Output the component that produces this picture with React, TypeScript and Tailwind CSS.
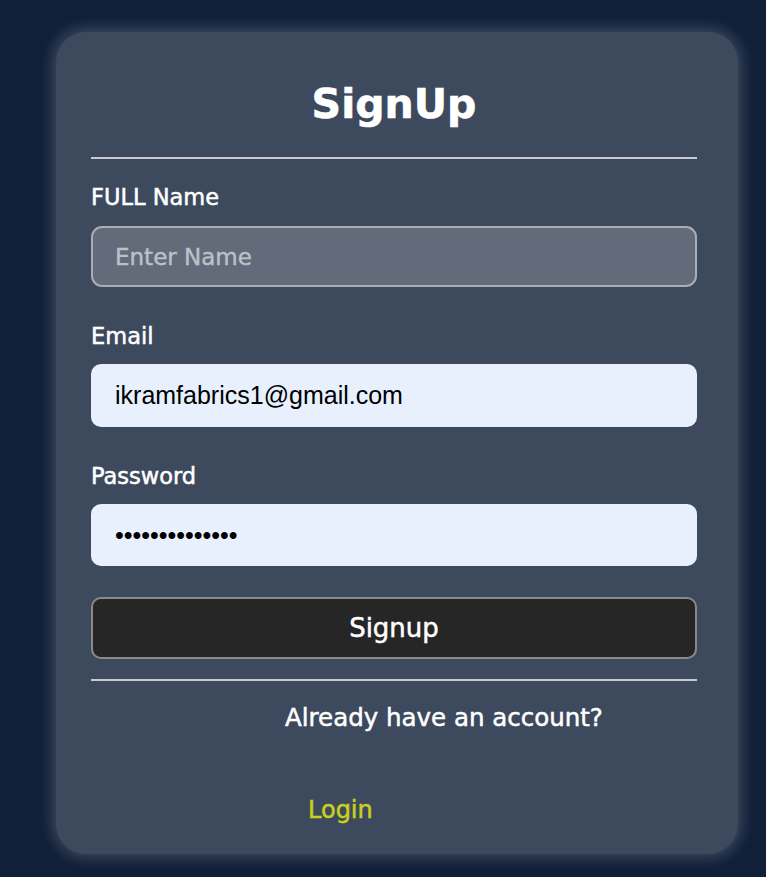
import { useState } from "react";

export default function App() {
  const [name, setName] = useState("");
  const [email, setEmail] = useState("ikramfabrics1@gmail.com");
  const [password, setPassword] = useState("ikramfabrics12");

  // DejaVu Book is a bit light next to the original medium weight; a thin stroke thickens it
  const medium = "[-webkit-text-stroke:0.5px_currentColor]";

  return (
    <div className="min-h-[877px] bg-[#112039] pl-[56px] pt-[32px] font-['DejaVu_Sans',sans-serif]">
      <form
        onSubmit={(e) => e.preventDefault()}
        className="w-[682px] rounded-[30px] bg-[#3d4a5e] pl-[35px] pr-[41px] pt-[38px] pb-[29px] shadow-[0_0_14px_4px_rgba(255,255,255,0.18)]"
      >
        <h1 className="text-center text-[41px] font-bold leading-[69px] text-white [-webkit-text-stroke:0.6px_white]">SignUp</h1>
        <hr className="mt-[18px] h-[2px] border-0 bg-[#c9c9d2]" />

        <label className={`mt-[23px] block text-[22.5px] leading-[30px] text-white ${medium}`}>FULL Name</label>
        <input
          type="text"
          value={name}
          onChange={(e) => setName(e.target.value)}
          placeholder="Enter Name"
          className="mt-[14px] block h-[61px] w-full rounded-[11px] border-2 border-[#a9adb6] bg-[#636b7b] px-[22px] text-[23px] text-white placeholder:text-[#bcc0c8] [-webkit-text-stroke:0.4px_#bcc0c8] focus:outline-none"
        />

        <label className={`mt-[34px] block text-[22.5px] leading-[30px] text-white ${medium}`}>Email</label>
        <input
          type="email"
          value={email}
          onChange={(e) => setEmail(e.target.value)}
          className="mt-[13px] block h-[63px] w-full rounded-[10px] bg-[#e8f0fe] px-[24px] font-['Liberation_Sans',Arial,sans-serif] text-[25px] text-black focus:outline-none"
        />

        <label className={`mt-[34px] block text-[22.5px] leading-[30px] text-white ${medium}`}>Password</label>
        <input
          type="password"
          value={password}
          onChange={(e) => setPassword(e.target.value)}
          className="mt-[13px] block h-[62px] w-full rounded-[10px] bg-[#e8f0fe] px-[24px] font-['Liberation_Sans',Arial,sans-serif] text-[25px] text-black focus:outline-none"
        />

        <button
          type="submit"
          className={`mt-[31px] block h-[62px] w-full rounded-[10px] border-2 border-[#8a8a8a] bg-[#262626] text-[26px] text-white ${medium}`}
        >
          Signup
        </button>

        <hr className="mt-[20px] h-[2px] border-0 bg-[#c9c9d2]" />

        <p className={`mt-[22px] pl-[194px] text-[24.5px] leading-[30px] text-white ${medium}`}>Already have an account?</p>
        <a href="#" className={`mt-[62px] block pl-[217px] text-[24px] leading-[30px] text-[#c8d11c] ${medium}`}>
          Login
        </a>
      </form>
    </div>
  );
}
